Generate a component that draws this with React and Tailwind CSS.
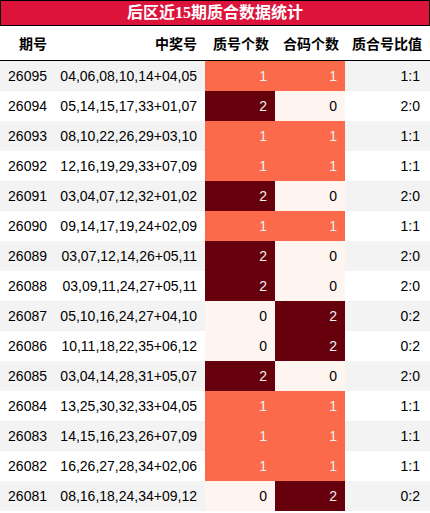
const rows = [
  ["26095", "04,06,08,10,14+04,05", 1, 1],
  ["26094", "05,14,15,17,33+01,07", 2, 0],
  ["26093", "08,10,22,26,29+03,10", 1, 1],
  ["26092", "12,16,19,29,33+07,09", 1, 1],
  ["26091", "03,04,07,12,32+01,02", 2, 0],
  ["26090", "09,14,17,19,24+02,09", 1, 1],
  ["26089", "03,07,12,14,26+05,11", 2, 0],
  ["26088", "03,09,11,24,27+05,11", 2, 0],
  ["26087", "05,10,16,24,27+04,10", 0, 2],
  ["26086", "10,11,18,22,35+06,12", 0, 2],
  ["26085", "03,04,14,28,31+05,07", 2, 0],
  ["26084", "13,25,30,32,33+04,05", 1, 1],
  ["26083", "14,15,16,23,26+07,09", 1, 1],
  ["26082", "16,26,27,28,34+02,06", 1, 1],
  ["26081", "08,16,18,24,34+09,12", 0, 2],
];

const cellColor = {
  0: "bg-[#fff5f0] text-black",
  1: "bg-[#fb6a4a] text-[#f1f1f1]",
  2: "bg-[#67000d] text-[#f1f1f1]",
};

const cols = "grid grid-cols-[55px_150px_70px_70px_85px]";

export default function App() {
  return (
    <div className="w-[430px] h-[513px] bg-white overflow-hidden font-['Liberation_Sans','Noto_Sans_CJK_SC',sans-serif] text-[14px]">
      <div className="h-[26px] border border-black bg-[#dc143c] flex items-center justify-center">
        <span className="text-white font-bold text-[16px] leading-none font-['Liberation_Serif','Noto_Sans_CJK_SC',serif]">
          后区近15期质合数据统计
        </span>
      </div>
      <div
        className={`${cols} h-[35px] border-b border-black items-center font-bold text-black font-['Noto_Sans_CJK_SC',sans-serif]`}
      >
        <div className="text-right pr-2">期号</div>
        <div className="text-right pr-2">中奖号</div>
        <div className="text-right pr-[6px]">质号个数</div>
        <div className="text-right pr-[6px]">合码个数</div>
        <div className="text-right pr-2">质合号比值</div>
      </div>
      {rows.map(([id, nums, z, h], i) => (
        <div
          key={id}
          className={`${cols} h-[30px] ${i % 2 === 0 ? "bg-[#f3f3f3]" : "bg-white"}`}
        >
          <div className="flex items-center justify-end pr-2 text-black">{id}</div>
          <div className="flex items-center justify-end pr-2 text-black">{nums}</div>
          <div className={`flex items-center justify-end pr-2 ${cellColor[z]}`}>{z}</div>
          <div className={`flex items-center justify-end pr-2 ${cellColor[h]}`}>{h}</div>
          <div className="flex items-center justify-end pr-2.5 text-black">
            {`${z}:${h}`}
          </div>
        </div>
      ))}
    </div>
  );
}
